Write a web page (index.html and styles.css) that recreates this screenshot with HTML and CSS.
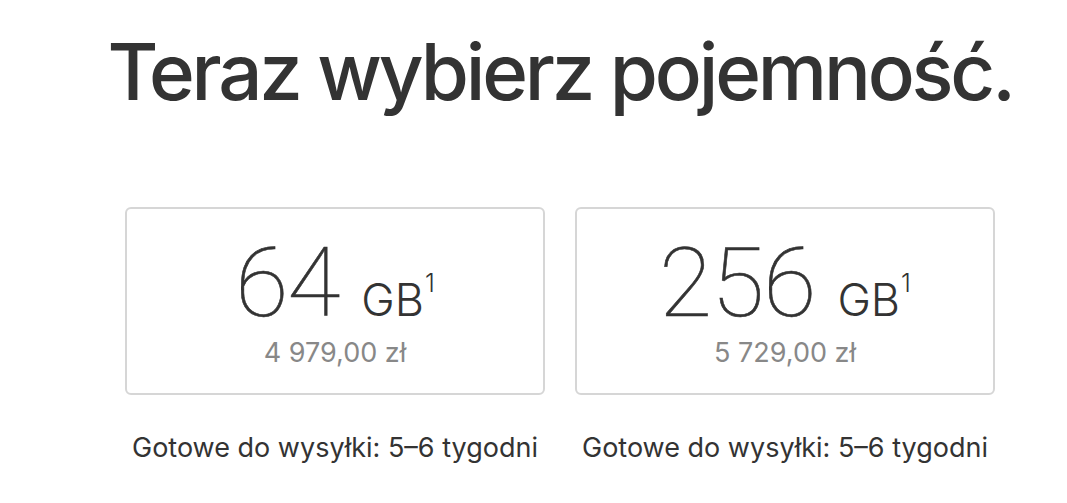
FILE: index.html
```html
<!DOCTYPE html>
<html lang="pl">
<head>
<meta charset="utf-8">
<title>Teraz wybierz pojemność.</title>
<link rel="stylesheet" href="styles.css">
</head>
<body>
<main class="page">
  <h1 class="title">Teraz wybierz pojemność.</h1>
  <div class="options">
    <div class="option">
      <button class="card" type="button">
        <span class="size"><span class="num">64</span><span class="unit">GB</span><sup class="note">1</sup></span>
        <span class="price">4 979,00 zł</span>
      </button>
      <p class="ship">Gotowe do wysyłki: 5–6 tygodni</p>
    </div>
    <div class="option">
      <button class="card" type="button">
        <span class="size"><span class="num">256</span><span class="unit">GB</span><sup class="note">1</sup></span>
        <span class="price">5 729,00 zł</span>
      </button>
      <p class="ship">Gotowe do wysyłki: 5–6 tygodni</p>
    </div>
  </div>
</main>
</body>
</html>
```

FILE: styles.css
```css
html, body {
  margin: 0;
  padding: 0;
  background: #fff;
}
body {
  font-family: Inter, "Noto Sans", "Liberation Sans", sans-serif;
  color: #333;
  width: 1067px;
  height: 503px;
  overflow: hidden;
}
.page {
  width: 870px;
  margin-left: 125px;
  padding-top: 22px;
}
.title {
  margin: 0 -40px;
  text-align: center;
  white-space: nowrap;
  font-size: 78px;
  line-height: 100px;
  font-weight: 500;
  letter-spacing: -3.2px;
  color: #333;
}
.options {
  display: grid;
  grid-template-columns: 420px 420px;
  column-gap: 30px;
  margin-top: 85px;
}
.option {
  display: flex;
  flex-direction: column;
  align-items: center;
}
.card {
  width: 420px;
  height: 188px;
  box-sizing: border-box;
  border: 2px solid #d6d6d6;
  border-radius: 6px;
  background: #fff;
  font-family: inherit;
  color: #333;
  padding: 34px 0 0;
  display: flex;
  flex-direction: column;
  align-items: center;
  justify-content: flex-start;
}
.size {
  display: block;
  height: 80px;
  line-height: 80px;
  white-space: nowrap;
}
.num {
  font-family: Roboto, Inter, sans-serif;
  font-size: 97px;
  font-weight: 100;
  letter-spacing: -1px;
  -webkit-text-stroke: 0.6px #333;
}
.unit {
  font-size: 45px;
  font-weight: 300;
  margin-left: 22px;
  letter-spacing: 0;
}
.note {
  font-size: 25px;
  font-weight: 300;
  vertical-align: 0;
  position: relative;
  top: -24px;
  margin-left: 1px;
  line-height: 0;
}
.price {
  display: block;
  font-size: 27px;
  line-height: 30px;
  color: #888;
  margin-top: 15px;
}
.ship {
  margin: 38px 0 0;
  font-size: 27px;
  line-height: 30px;
  color: #333;
}
```
